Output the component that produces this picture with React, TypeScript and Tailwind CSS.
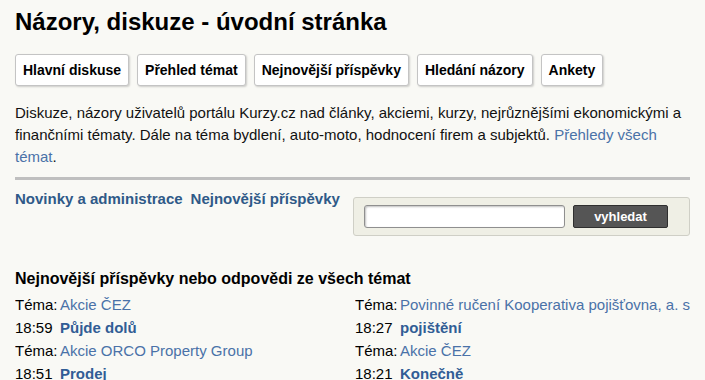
const tabs = ["Hlavní diskuse", "Přehled témat", "Nejnovější příspěvky", "Hledání názory", "Ankety"];

type Post = { topic: string; time: string; title: string };

const left: Post[] = [
  { topic: "Akcie ČEZ", time: "18:59", title: "Půjde dolů" },
  { topic: "Akcie ORCO Property Group", time: "18:51", title: "Prodej" },
];

const right: Post[] = [
  { topic: "Povinné ručení Kooperativa pojišťovna, a. s.", time: "18:27", title: "pojištění" },
  { topic: "Akcie ČEZ", time: "18:21", title: "Konečně" },
];

function PostColumn({ posts, width }: { posts: Post[]; width: string }) {
  return (
    <div className={`${width} overflow-hidden text-[15px] leading-[23px]`}>
      {posts.map((p) => (
        <div key={p.time}>
          <div className="flex whitespace-nowrap">
            <span className="w-[45px] shrink-0 text-black">Téma:</span>
            <a className="text-[#4a72a8]">{p.topic}</a>
          </div>
          <div className="flex whitespace-nowrap">
            <span className="w-[45px] shrink-0 text-black">{p.time}</span>
            <a className="font-bold text-[#315d95]">{p.title}</a>
          </div>
        </div>
      ))}
    </div>
  );
}

export default function App() {
  return (
    <div className="min-h-[380px] bg-[#f9f9f5] px-[15px] pt-[8px] font-['Liberation_Sans',Arial,sans-serif] text-black">
      <h1 className="text-[24px] font-bold leading-[28px]">Názory, diskuze - úvodní stránka</h1>

      <div className="mt-[18px] flex gap-2">
        {tabs.map((t) => (
          <button
            key={t}
            type="button"
            className="rounded-[3px] border border-[#c4c4c4] bg-white px-[7px] py-[7px] text-[14px] font-bold leading-[16px] shadow-[1px_1px_2px_rgba(0,0,0,0.18)]"
          >
            {t}
          </button>
        ))}
      </div>

      <p className="mt-[16px] text-[15px] leading-[22px] text-[#111]">
        Diskuze, názory uživatelů portálu Kurzy.cz nad články, akciemi, kurzy, nejrůznějšími ekonomickými a
        finančními tématy. Dále na téma bydlení, auto-moto, hodnocení firem a subjektů.{" "}
        <a className="text-[#4a72a8]">Přehledy všech témat</a>.
      </p>

      <div className="mt-[9px] h-[3px] bg-[#bfbfbf]" />

      <div className="mt-[9px] flex justify-between">
        <div className="flex gap-[8px] text-[15px] font-bold leading-[20px] text-[#2f5a88]">
          <a>Novinky a administrace</a>
          <a>Nejnovější příspěvky</a>
        </div>
        <div className="mt-[8px] flex w-[337px] items-center gap-[8px] rounded-[3px] border border-[#cfcfc6] bg-[#efefe5] py-[7px] pl-[10px]">
          <input className="h-[23px] w-[201px] rounded-[3px] border border-[#8f8f8f] bg-white shadow-[inset_1px_1px_2px_rgba(0,0,0,0.25)]" />
          <button
            type="button"
            className="h-[23px] w-[95px] rounded-[2px] border border-[#2f2f2f] bg-[#555] text-[13px] font-bold text-white"
          >
            vyhledat
          </button>
        </div>
      </div>

      <h2 className="mt-[33px] text-[16px] font-bold leading-[20px]">Nejnovější příspěvky nebo odpovědi ze všech témat</h2>

      <div className="mt-[4px] flex">
        <PostColumn posts={left} width="w-[340px]" />
        <PostColumn posts={right} width="w-[335px]" />
      </div>
    </div>
  );
}
